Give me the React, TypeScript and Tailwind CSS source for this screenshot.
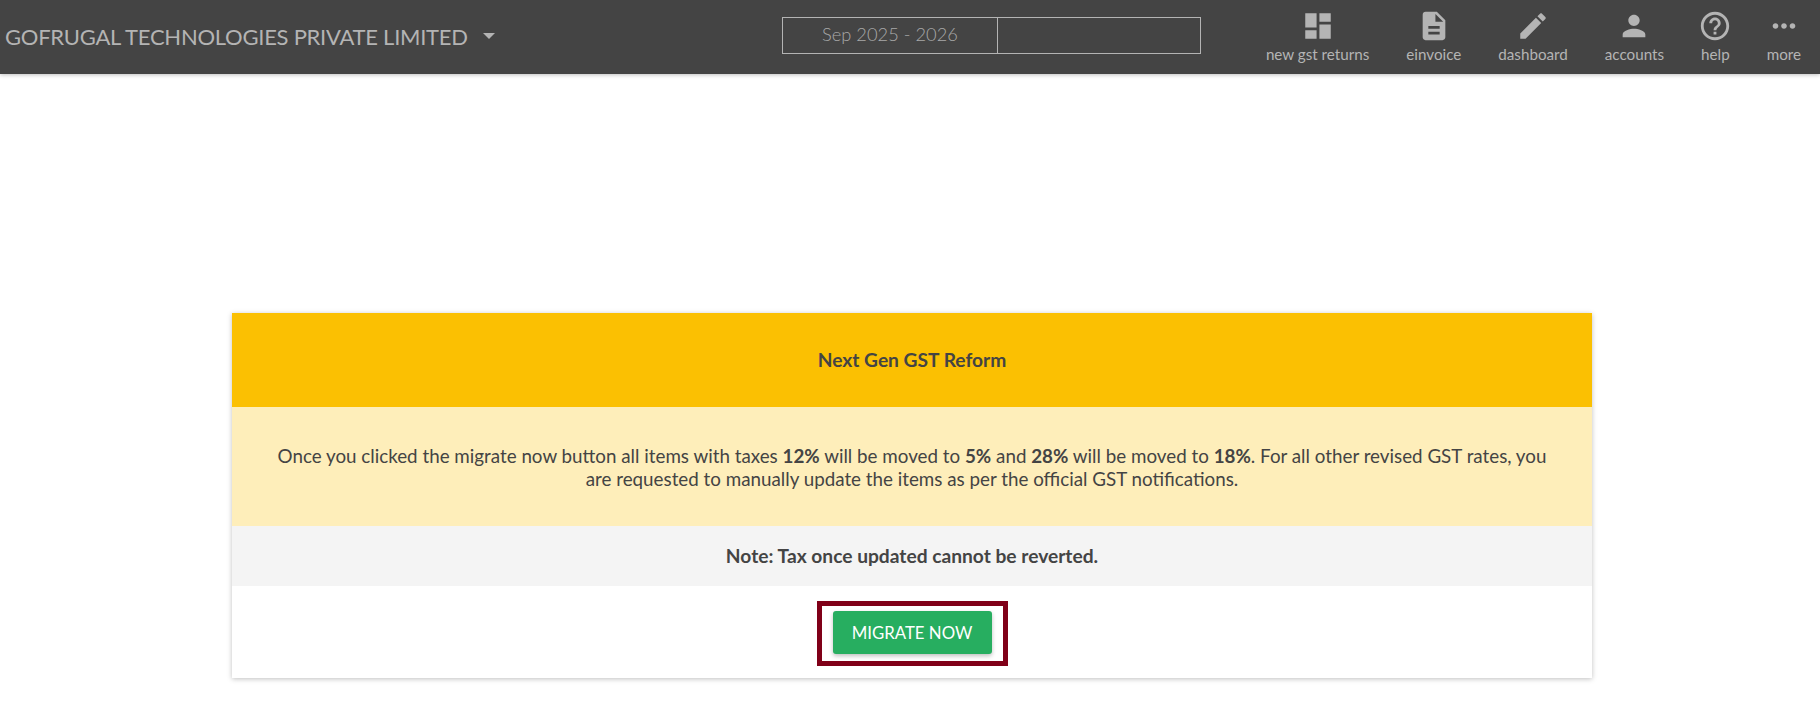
const navItems = [
    {label: "new gst returns", d: "M3 13h8V3H3v10zm0 8h8v-6H3v6zm10 0h8V11h-8v10zm0-18v6h8V3h-8z"},
    {label: "einvoice", d: "M14 2H6c-1.1 0-1.99.9-1.99 2L4 20c0 1.1.89 2 1.99 2H18c1.1 0 2-.9 2-2V8l-6-6zm2 16H8v-2h8v2zm0-4H8v-2h8v2zm-3-5V3.5L18.5 9H13z"},
    {label: "dashboard", d: "M3 17.25V21h3.75L17.81 9.94l-3.75-3.75L3 17.25zM20.71 7.04c.39-.39.39-1.02 0-1.41l-2.34-2.34c-.39-.39-1.02-.39-1.41 0l-1.83 1.83 3.75 3.75 1.83-1.83z"},
    {label: "accounts", d: "M12 12c2.21 0 4-1.79 4-4s-1.79-4-4-4-4 1.79-4 4 1.79 4 4 4zm0 2c-2.67 0-8 1.34-8 4v2h16v-2c0-2.66-5.33-4-8-4z"},
    {label: "help", d: "M11 18h2v-2h-2v2zm1-16C6.48 2 2 6.48 2 12s4.48 10 10 10 10-4.48 10-10S17.52 2 12 2zm0 18c-4.41 0-8-3.59-8-8s3.59-8 8-8 8 3.59 8 8-3.59 8-8 8zm0-14c-2.21 0-4 1.79-4 4h2c0-1.1.9-2 2-2s2 .9 2 2c0 2-3 1.75-3 5h2c0-2.25 3-2.5 3-5 0-2.21-1.79-4-4-4z"},
    {label: "more", d: "M6 10c-1.1 0-2 .9-2 2s.9 2 2 2 2-.9 2-2-.9-2-2-2zm12 0c-1.1 0-2 .9-2 2s.9 2 2 2 2-.9 2-2-.9-2-2-2zm-6 0c-1.1 0-2 .9-2 2s.9 2 2 2 2-.9 2-2-.9-2-2-2z"},
]

function App() {
    return (
        <div className="h-[710px] w-[1820px] overflow-hidden bg-white font-['Lato',sans-serif]">
            <header className="flex h-[74px] items-center bg-[#444444] pl-[5px] pr-[19px] text-[#b4b4b4] shadow-[0_1px_4px_rgba(0,0,0,0.25)]">
                <div className="mb-[2px] flex w-[777px] items-center">
                    <span className="text-[22px] tracking-[-0.26px] whitespace-nowrap">GOFRUGAL TECHNOLOGIES PRIVATE LIMITED</span>
                    <span className="ml-[15px] h-0 w-0 border-x-[6px] border-t-[6px] border-x-transparent border-t-[#b4b4b4]"></span>
                </div>
                <div className="mb-[4px] flex h-[37px] w-[419px] border border-[#b4b4b4]">
                    <div className="flex w-[215px] items-center justify-center border-r border-[#b4b4b4] text-[18.3px] font-light text-[#a8a8a8]">Sep 2025 - 2026</div>
                    <div className="flex-1"></div>
                </div>
                <nav className="mb-[2px] ml-auto flex">
                    {navItems.map((item) => (
                        <div key={item.label} className="ml-[37px] flex flex-col items-center">
                            <svg viewBox="0 0 24 24" fill="currentColor" className="-mx-[4px] h-[34px] w-[34px]">
                                <path d={item.d}/>
                            </svg>
                            <span className="mt-[2px] text-[15.2px] leading-[18px] whitespace-nowrap">{item.label}</span>
                        </div>
                    ))}
                </nav>
            </header>
            <main className="pl-[232px] pr-[228px] pt-[239px]">
                <div className="bg-white text-center text-[#444444] shadow-[0_1px_5px_rgba(0,0,0,0.25)]">
                    <div className="flex h-[94px] items-center justify-center bg-[#fbc002] text-[19.2px] font-bold">Next Gen GST Reform</div>
                    <div className="flex h-[119px] items-center justify-center bg-[#feeeba] px-[40px] text-[18.8px] leading-[23px]">
                        <p>
                            Once you clicked the migrate now button all items with taxes <b>12%</b> will be moved to <b>5%</b> and <b>28%</b> will be moved to <b>18%</b>. For all other revised GST rates, you are requested to manually update the items as per the official GST notifications.
                        </p>
                    </div>
                    <div className="flex h-[60px] items-center justify-center bg-[#f4f4f4] text-[19.2px] font-bold">Note: Tax once updated cannot be reverted.</div>
                    <div className="flex h-[92px] items-start justify-center pt-[15px]">
                        <div className="border-[5px] border-[#800018] px-[11px] pb-[7px] pt-[5px]">
                            <button className="block h-[43px] w-[159px] rounded-[3px] bg-[#27ae60] text-[16.8px] text-white shadow-[0_2px_4px_rgba(0,0,0,0.25)]">MIGRATE NOW</button>
                        </div>
                    </div>
                </div>
            </main>
        </div>
    );
}

export default App;
